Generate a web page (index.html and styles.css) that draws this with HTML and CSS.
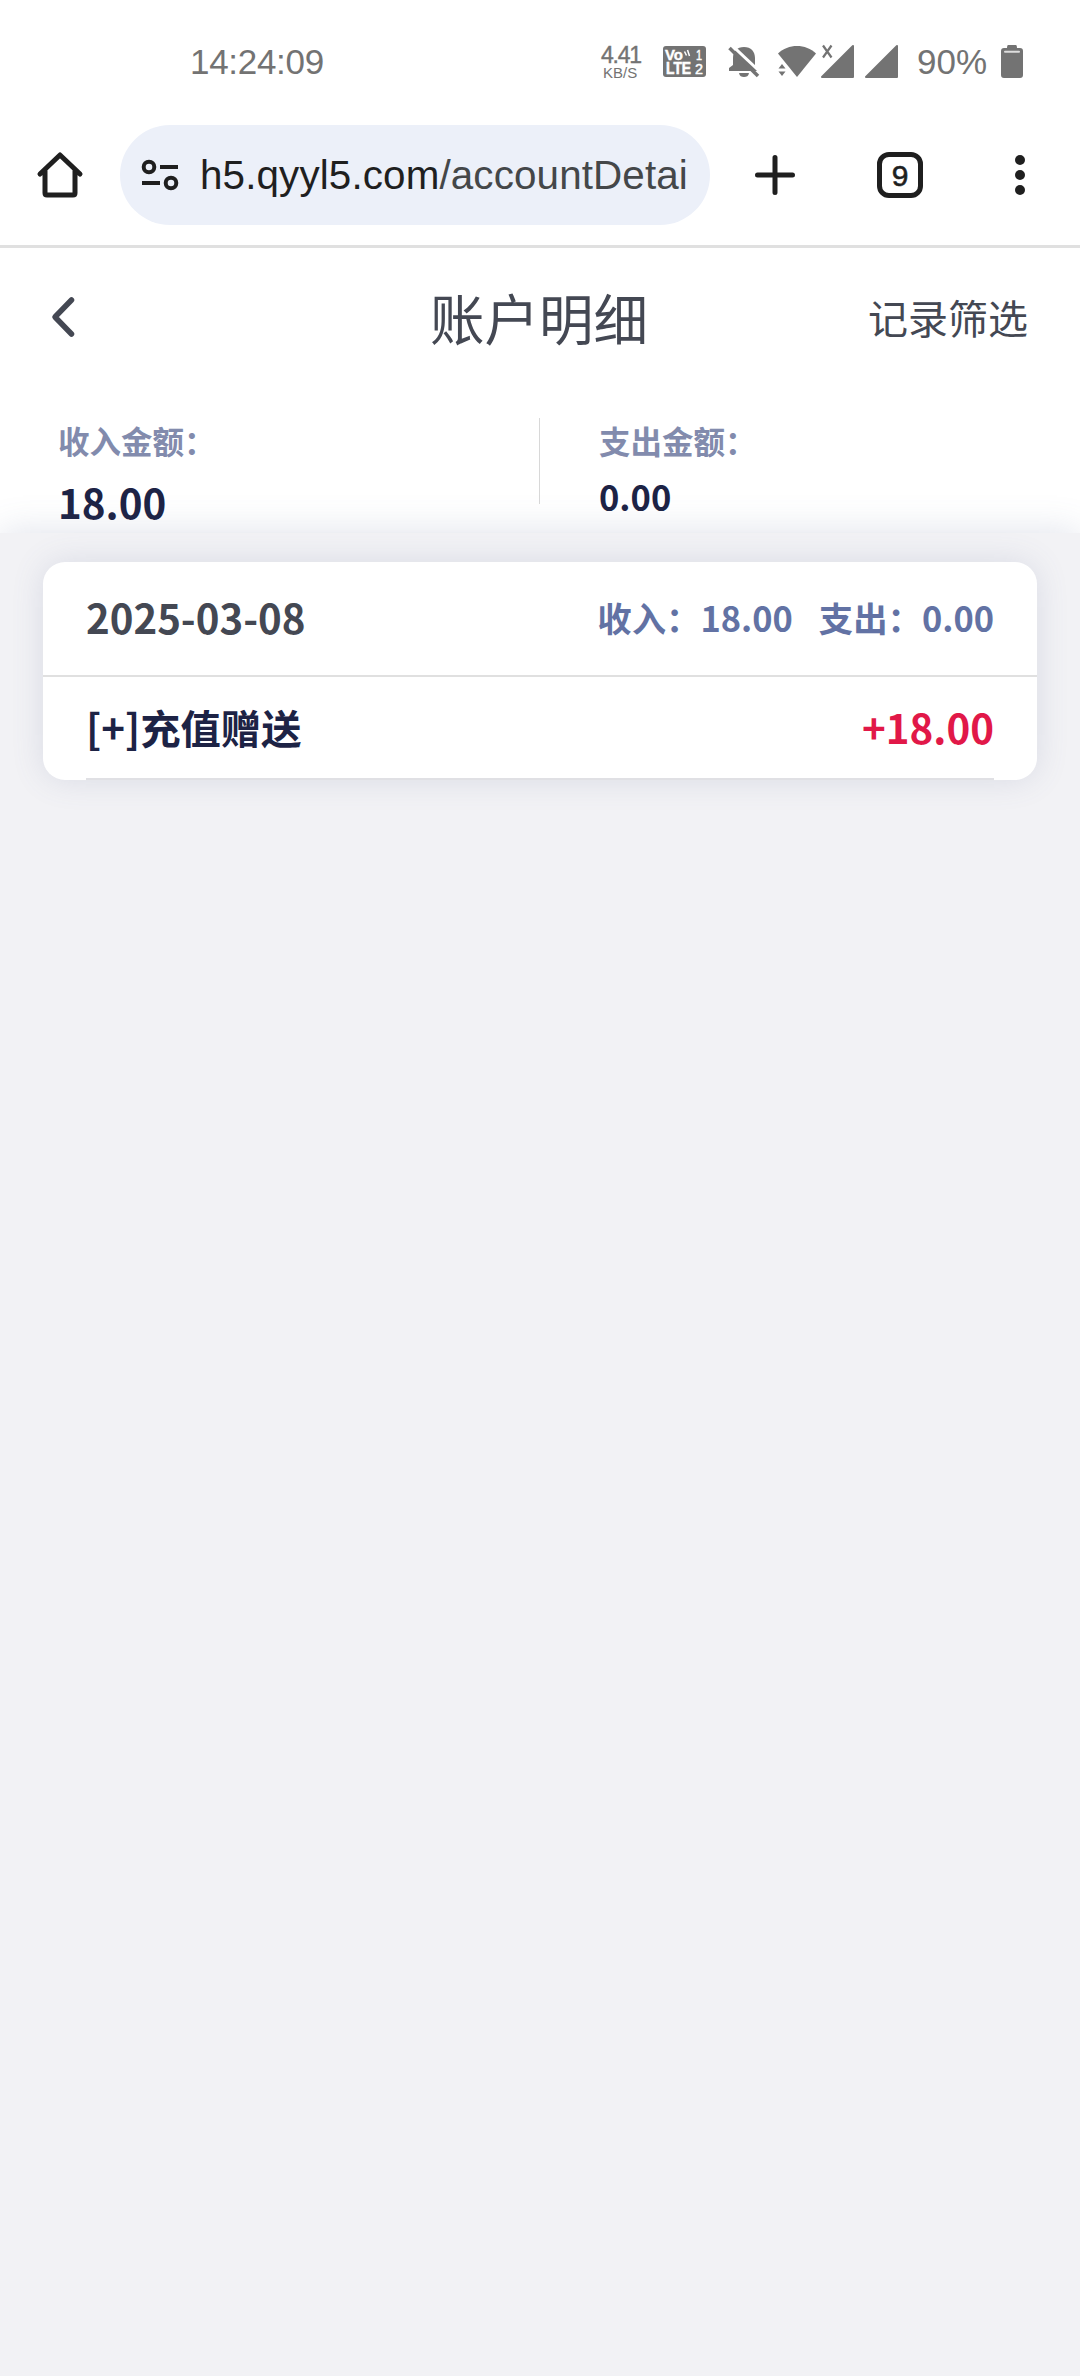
FILE: index.html
```html
<!DOCTYPE html>
<html lang="zh-CN">
<head>
<meta charset="utf-8">
<title>账户明细</title>
<link rel="stylesheet" href="styles.css">
</head>
<body>
<header class="status">
  <span class="clock">14:24:09</span>
  <div class="speed"><span class="rate">4.41</span><span class="unit">KB/S</span></div>
  <svg class="volte" width="43" height="31" viewBox="0 0 43 31">
    <rect width="43" height="31" rx="3" fill="#737373"/>
    <g fill="#fff" font-family="Liberation Sans, sans-serif" font-weight="bold">
      <text x="2" y="13.500" font-size="15" textLength="18" lengthAdjust="spacingAndGlyphs" stroke="#fff" stroke-width=".4">Vo</text>
      <text x="3" y="28" font-size="16.500" textLength="25" lengthAdjust="spacingAndGlyphs" stroke="#fff" stroke-width=".6">LTE</text>
      <text x="33" y="14" font-size="15" textLength="6" lengthAdjust="spacingAndGlyphs" font-weight="normal" stroke="#fff" stroke-width=".5">1</text>
      <text x="32" y="28" font-size="15.500" textLength="8" lengthAdjust="spacingAndGlyphs" font-weight="normal" stroke="#fff" stroke-width=".5">2</text>
    </g>
    <path d="M21.500 5.500l2 4M24.500 4l2 6" stroke="#fff" stroke-width="1.500" fill="none"/>
  </svg>
  <svg class="bell" width="32" height="32" viewBox="0 0 32 32" fill="#737373">
    <path d="M16 1c7 0 11 4.500 11 11v8l4 4v1H1v-3l4-3v-7C5 5.500 9 1 16 1zM11 27h10c-.5 3-2.500 4-5 4s-4.500-1-5-4z"/>
    <path d="M3-1.500L35 28.500" stroke="#fff" stroke-width="3"/>
    <path d="M0 0h5L0 8z" fill="#fff"/>
    <path d="M1.500 2L30 30" stroke="#737373" stroke-width="3.500"/>
  </svg>
  <svg class="wifi" width="39" height="33" viewBox="0 0 39 33" fill="#737373">
    <path d="M0 8.500C10-1.500 28-1.500 38 8.500L19 32z"/>
    <path d="M.500 23.500l3.500-4.500 3.500 4.500zM.500 26.500h7L4 31z"/>
  </svg>
  <svg class="sim" width="78" height="36" viewBox="0 0 78 36">
    <path d="M32 2v31H1zM76 2v31H45z" fill="#737373" stroke="#737373" stroke-width="2" stroke-linejoin="round"/>
    <path d="M2 1.500l8.500 12M10.500 1.500l-8.500 12" stroke="#737373" stroke-width="2.200"/>
  </svg>
  <span class="percent">90%</span>
  <svg class="battery" width="22" height="34" viewBox="0 0 22 34">
    <path d="M7 0h8q1 0 1 3h3q3 0 3 3v24q0 3-3 3H3q-3 0-3-3V6q0-3 3-3h3q0-3 1-3z" fill="#737373"/>
    <path d="M4 6.800h14" stroke="#ddd" stroke-width="2" stroke-linecap="round"/>
  </svg>
</header>

<nav class="toolbar">
  <svg class="home" width="48" height="48" viewBox="0 0 48 48" fill="none" stroke="#1f1f1f" stroke-width="5" stroke-linecap="round" stroke-linejoin="round">
    <path d="M4 23L24 4l20 19M9 20v22q0 2 2 2h26q2 0 2-2V20" />
  </svg>
  <div class="address">
    <svg class="tune" width="38" height="32" viewBox="0 0 38 32" fill="none" stroke="#1f1f1f" stroke-width="4">
      <circle cx="8" cy="8" r="5.300"/><path d="M19 8h18M1 24h18"/><circle cx="30" cy="24" r="5.300"/>
    </svg>
    <div class="url"><span class="host">h5.qyyl5.com</span>/accountDetail</div>
  </div>
  <svg class="plus" width="40" height="40" viewBox="0 0 40 40" stroke="#1f1f1f" stroke-width="5" stroke-linecap="round">
    <path d="M20 2.500v35M2.500 20h35"/>
  </svg>
  <span class="tabs">9</span>
  <svg class="more" width="10" height="40" viewBox="0 0 10 40" fill="#1f1f1f">
    <circle cx="5" cy="5" r="5"/><circle cx="5" cy="20" r="5"/><circle cx="5" cy="35" r="5"/>
  </svg>
</nav>

<section class="titlebar">
  <svg class="back" width="26" height="42" viewBox="0 0 26 42" fill="none" stroke="#444853" stroke-width="5.500" stroke-linecap="round" stroke-linejoin="round">
    <path d="M21.500 4L5 21l16.500 17"/>
  </svg>
  <h1 class="title">账户明细</h1>
  <span class="filter">记录筛选</span>
</section>

<section class="totals">
  <div class="total total-in">
    <span class="label">收入金额：</span>
    <span class="amount amount-in">18.00</span>
  </div>
  <div class="total total-out">
    <span class="label">支出金额：</span>
    <span class="amount">0.00</span>
  </div>
</section>

<main class="records">
  <article class="card">
    <div class="day">
      <span class="date">2025-03-08</span>
      <div class="summary"><span>收入：18.00</span><span>支出：0.00</span></div>
    </div>
    <div class="entry">
      <span class="name">[+]充值赠送</span>
      <span class="value">+18.00</span>
    </div>
  </article>
</main>
</body>
</html>
```
FILE: styles.css
```css
* { box-sizing: border-box; }

body {
  margin: 0;
  min-height: 2376px;
  display: flex;
  flex-direction: column;
  background: #fff;
  font-family: "Noto Sans CJK SC", sans-serif;
  white-space: nowrap;
}

svg { display: block; flex: none; }

.status {
  height: 105px;
  flex: none;
  padding-top: 44px;
  display: flex;
  align-items: flex-start;
  color: #737373;
  font-family: "Liberation Sans", sans-serif;
}

.clock {
  width: 410px;
  margin-left: 190px;
  margin-top: -2px;
  font-size: 35px;
  line-height: 40px;
  letter-spacing: -0.3px;
}

.speed {
  width: 63px;
  display: flex;
  flex-direction: column;
}

.rate { padding-left: 1px; font-size: 23px; line-height: 23px; letter-spacing: -1.2px; -webkit-text-stroke: 0.4px; }
.unit { padding-left: 3px; font-size: 15px; line-height: 11px; }
.volte { margin-top: 2px; }
.bell { margin: 2px 0 0 22px; }
.wifi { margin: 1px 0 0 18px; }
.sim { margin-left: 4px; }

.percent {
  width: 84px;
  margin: -2px 0 0 18px;
  font-size: 35px;
  line-height: 40px;
}

.battery { margin-top: 1px; }

.toolbar {
  height: 143px;
  flex: none;
  padding: 20px 55px 0 36px;
  display: flex;
  align-items: flex-start;
  border-bottom: 3px solid #e0e0e0;
  font-family: "Liberation Sans", sans-serif;
}

.home { margin-top: 26px; }

.address {
  width: 590px;
  height: 100px;
  margin-left: 36px;
  padding-left: 21px;
  display: flex;
  align-items: center;
  border-radius: 50px;
  background: #ecf0f9;
}

.url {
  width: 490px;
  margin-left: 21px;
  overflow: hidden;
  color: #444749;
  font-size: 40.4px;
  line-height: 52px;
  letter-spacing: 0.12px;
}

.host { color: #1f1f1f; }
.plus { margin: 30px 0 0 45px; }

.tabs {
  width: 46px;
  height: 46px;
  margin: 27px 92px 0 82px;
  border: 5px solid #1f1f1f;
  border-radius: 12px;
  color: #1f1f1f;
  font-size: 30px;
  line-height: 37px;
  text-align: center;
  -webkit-text-stroke: 0.6px;
}

.more { margin-top: 30px; }

.titlebar {
  height: 142px;
  flex: none;
  padding: 0 52px 4px 50px;
  display: grid;
  grid-template-columns: 1fr auto 1fr;
  align-items: center;
  color: #444853;
}

.title { margin: 0; font-size: 54.5px; font-weight: 400; line-height: 80px; }
.filter { justify-self: end; font-size: 40px; line-height: 60px; }

.totals {
  height: 143px;
  flex: none;
  padding-top: 28px;
  display: grid;
  grid-template-columns: 1fr 1fr;
}

.total {
  height: 86px;
  padding-left: 58px;
  display: flex;
  flex-direction: column;
}

.total-in { border-right: 1px solid #d8d8d8; }
.total-out { padding-left: 59px; }
.label { margin-top: -1px; color: #828bad; font-size: 31.5px; font-weight: 700; line-height: 47px; }
.amount { color: #1d2345; font-size: 34.500px; font-weight: 700; line-height: 65px; }
.amount-in { font-size: 40.3px; line-height: 75px; }

.records {
  flex: 1;
  padding: 29px 43px;
  background: #f2f2f5;
  box-shadow: 0 0 36px rgba(92, 104, 150, 0.2);
}

.card {
  height: 218px;
  border-radius: 22px;
  background: #fff;
  box-shadow: 0 0 32px rgba(92, 104, 150, 0.16);
}

.day {
  height: 115px;
  padding: 0 43px 4px;
  display: flex;
  align-items: center;
  justify-content: space-between;
  border-bottom: 2px solid #e0e0e0;
}

.date { color: #444853; font-size: 40.2px; font-weight: 700; }
.summary { display: flex; gap: 26px; color: #6272a4; font-size: 34.4px; font-weight: 700; }

.entry {
  height: 103px;
  margin: 0 43px;
  padding-bottom: 2px;
  display: flex;
  align-items: center;
  justify-content: space-between;
  border-bottom: 2px solid #e0e0e4;
  font-weight: 700;
}

.name { color: #1d2345; font-size: 40.3px; }
.value { color: #e11848; font-size: 40.3px; }
```
